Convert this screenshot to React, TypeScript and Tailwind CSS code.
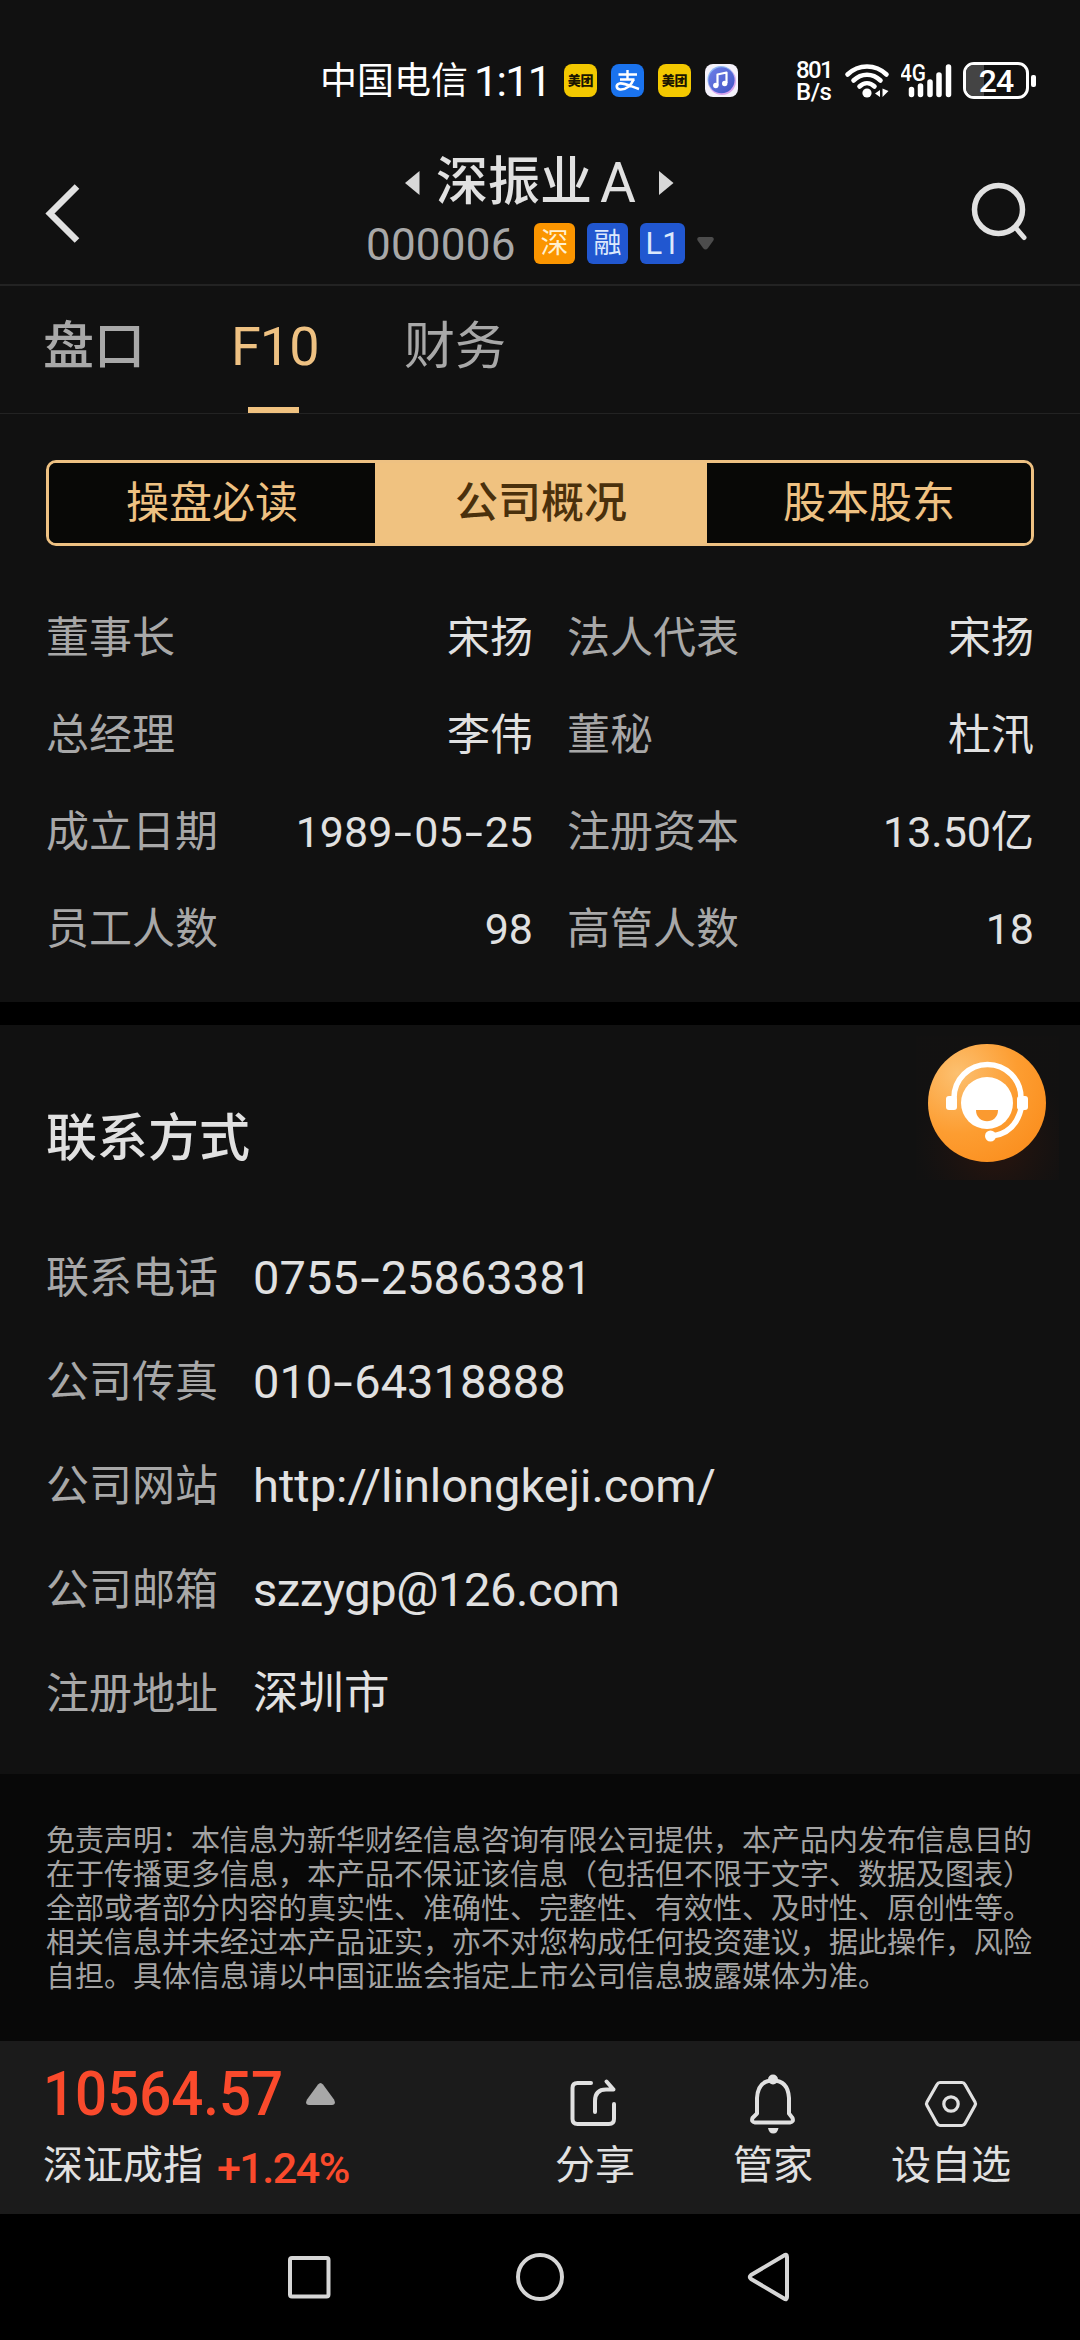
import React from "react";

const overview = [
  [["董事长", "宋扬"], ["法人代表", "宋扬"]],
  [["总经理", "李伟"], ["董秘", "杜汛"]],
  [["成立日期", "1989-05-25"], ["注册资本", "13.50亿"]],
  [["员工人数", "98"], ["高管人数", "18"]],
];

const contacts = [
  { label: "联系电话", value: "0755-25863381", style: "text-[47px]" },
  { label: "公司传真", value: "010-64318888", style: "text-[47px]" },
  { label: "公司网站", value: "http://linlongkeji.com/", style: "text-[47px]" },
  { label: "公司邮箱", value: "szzygp@126.com", style: "text-[47px] tracking-[-0.4px]" },
  { label: "注册地址", value: "深圳市", style: "text-[45.5px]" },
];

const disclaimer = [
  "免责声明：本信息为新华财经信息咨询有限公司提供，本产品内发布信息目的",
  "在于传播更多信息，本产品不保证该信息（包括但不限于文字、数据及图表）",
  "全部或者部分内容的真实性、准确性、完整性、有效性、及时性、原创性等。",
  "相关信息并未经过本产品证实，亦不对您构成任何投资建议，据此操作，风险",
  "自担。具体信息请以中国证监会指定上市公司信息披露媒体为准。",
];

/* Widens hyphens so that they sit evenly between figures. */
function Figures({ text }: { text: string }) {
  return (
    <>
      {text.split(/(-)/).map((part, i) =>
        part === "-" ? (
          <span key={i} className="inline-block w-[22px] scale-x-150 text-center">-</span>
        ) : (
          <React.Fragment key={i}>{part}</React.Fragment>
        )
      )}
    </>
  );
}

function StatusBar() {
  return (
    <div className="flex h-[120px] items-start pl-[320px] text-white">
      <div className="mt-[60px] h-[44px] w-[150px] whitespace-nowrap text-[37px] leading-[44px]">中国电信</div>
      <div className="mt-[59px] h-[44px] w-[94px] pl-[4px] text-[43px] leading-[44px] tracking-[-1.7px]">1:11</div>
      <div className="mt-[64px] flex gap-[14px]">
        <AppMeituan />
        <div className="flex size-[33px] items-center justify-center rounded-[8px] bg-[#1a73ee]">
          <svg width="33" height="33" viewBox="0 0 33 33" fill="none" stroke="#fff">
            <path d="M7.500 10.500H26M16.500 6v10M9 15.500h14.500" strokeWidth="2.400" />
            <path d="M22.500 15.500C20.500 21 15 26 9 25.500 5 25 4.500 20.500 8.500 19.500 13 18.500 20 22.500 28 25" strokeWidth="2.600" />
          </svg>
        </div>
        <AppMeituan />
        <div className="flex size-[33px] items-center justify-center rounded-[8px] bg-[#f4f2fb]">
          <svg width="33" height="33" viewBox="0 0 33 33">
            <defs>
              <linearGradient id="mus" x1="0" y1="0" x2="1" y2="1">
                <stop offset="0" stopColor="#6d7fe8" />
                <stop offset="1" stopColor="#4254c4" />
              </linearGradient>
            </defs>
            <circle cx="17" cy="17" r="14" fill="#d9a4ee" />
            <circle cx="16" cy="15.500" r="13.500" fill="#8fb8f4" />
            <circle cx="16.500" cy="16.200" r="13" fill="url(#mus)" />
            <path d="M12.500 21.500V10.500L21.500 8.500V19" fill="none" stroke="#fff" strokeWidth="2.200" strokeLinejoin="round" />
            <circle cx="10.800" cy="21.500" r="2.700" fill="#fff" />
            <circle cx="19.700" cy="19.500" r="2.700" fill="#fff" />
          </svg>
        </div>
      </div>
      <div className="ml-[58px] mt-[60px] w-[48px] whitespace-nowrap text-[24px] font-medium leading-[21.5px] tracking-[-1.6px]">
        <div>801</div>
        <div className="tracking-[-0.5px]">B/s</div>
      </div>
      <svg className="mt-[60px]" width="46" height="40" viewBox="0 0 46 40" fill="none" stroke="#fff" strokeLinecap="round">
        <path d="M3.500 14.500C14.500 3.800 31.500 3.800 42.500 14.500" strokeWidth="4.600" />
        <path d="M9.500 20.500C17.500 12.800 28.500 12.800 36.500 20.500" strokeWidth="4.600" />
        <path d="M15.500 26.500C20 22.200 26 22.200 30.500 26.500" strokeWidth="4.600" />
        <circle cx="23" cy="33" r="4.600" fill="#fff" stroke="none" />
        <path d="M36 30v7l-5-3.500zM38.500 28.500v8.500l6-6z" fill="#fff" stroke="none" />
      </svg>
      <div className="ml-[11px] mt-[60px] flex w-[53px]">
        <svg width="53" height="40" viewBox="0 0 53 40">
          <text x="-1" y="20.500" fontSize="23" fontWeight="500" fill="#fff" textLength="26" lengthAdjust="spacingAndGlyphs">4G</text>
          <g stroke="#fff" strokeWidth="5.500" strokeLinecap="round">
            <path d="M10.500 29.500v5M19.500 26v8.500M29 22v12.500M38 15v19.500M47.500 7v27.500" />
          </g>
        </svg>
      </div>
      <div className="ml-[9px] mt-[62px] flex items-center">
        <div className="relative flex h-[37px] w-[66px] overflow-hidden rounded-[11px] border-[3px] border-white">
          <div className="w-[18px] bg-[#444]" />
          <div className="absolute inset-0 text-center text-[32px] font-medium leading-[32px] tracking-[-1px]">24</div>
        </div>
        <div className="ml-[2px] h-[12px] w-[5px] rounded-[2px] bg-white" />
      </div>
    </div>
  );
}

function AppMeituan() {
  return (
    <div className="flex size-[33px] items-center justify-center rounded-[8px] bg-[#f3c800] text-[13px] font-black leading-[33px] tracking-[-0.2px] text-[#1a1500]">
      <span className="whitespace-nowrap">美团</span>
    </div>
  );
}

function Header() {
  return (
    <header className="flex h-[166px] border-b-2 border-[#232323] pl-[44px] pr-[49px]">
      <svg className="mt-[62px]" width="38" height="62" viewBox="0 0 38 62" fill="none" stroke="#e1e1e1" strokeWidth="6.500">
        <path d="M33 4.500L6 31.500l27 27" />
      </svg>
      <div className="ml-[283px] flex w-[360px] flex-col">
        <div className="mt-[33px] flex h-[60px] items-center whitespace-nowrap pl-[40px] text-[#e1e1e1]">
          <svg width="15" height="24" viewBox="0 0 15 24"><path d="M0 12L14.500 0v24z" fill="#d8d8d8" /></svg>
          <span className="ml-[16px] text-[52px] font-medium leading-[60px]">深振业</span>
          <span className="ml-[8px] text-[55px] leading-[60px]">A</span>
          <svg className="ml-[23px]" width="15" height="24" viewBox="0 0 15 24"><path d="M14.500 12L0 0v24z" fill="#d8d8d8" /></svg>
        </div>
        <div className="flex h-[60px] items-center whitespace-nowrap">
          <span className="w-[169px] pl-[1px] pt-[3px] text-[44px] leading-[60px] tracking-[0.2px] text-[#a8a8a8]">000006</span>
          <span className="h-[41px] w-[41px] rounded-[6px] bg-[#fb9500] text-center text-[28px] leading-[41px] text-[#fff0d0]">深</span>
          <span className="ml-[12px] h-[41px] w-[41px] rounded-[6px] bg-[#2157d0] text-center text-[28px] leading-[41px] text-[#dce8fc]">融</span>
          <span className="ml-[12px] h-[41px] w-[45px] rounded-[6px] bg-[#2157d0] text-center text-[31px] leading-[41px] text-[#dce8fc]">L1</span>
          <svg className="ml-[12px]" width="17" height="13" viewBox="0 0 17 13"><path d="M2 0h13q3 1 1 4l-5 7q-2.500 3-5 0l-5-7q-2-3 1-4z" fill="#4c4c4c" /></svg>
        </div>
      </div>
      <svg className="ml-auto mt-[62px]" width="60" height="60" viewBox="0 0 60 60" fill="none" stroke="#e1e1e1" strokeWidth="5.500">
        <circle cx="27.500" cy="27.500" r="24" />
        <path d="M44.500 45.500L53 55.500" strokeLinecap="round" strokeWidth="5" />
      </svg>
    </header>
  );
}

function Tabs() {
  return (
    <nav className="flex h-[128px] items-start border-b border-[#232323] text-[51px] text-[#a8a8a8]">
      <div className="ml-[43px] mt-[31px] font-medium leading-[60px]">盘口</div>
      <div className="ml-[86px] flex h-[127px] w-[87px] flex-col justify-between pt-[31px] text-[54px] text-[#eec182]">
        <span className="leading-[60px] tracking-[-1px]">F10</span>
        <span className="ml-[17px] h-[6px] w-[51px] bg-[#f0c280]" />
      </div>
      <div className="ml-[86px] mt-[31px] leading-[60px]">财务</div>
    </nav>
  );
}

function Segments() {
  return (
    <div className="mx-[46px] grid h-[86px] grid-cols-[326px_332px_1fr] overflow-hidden rounded-[10px] border-[3px] border-[#eec182] text-center text-[43px] leading-[80px] text-[#eec182]">
      <div className="bg-[#080806]">操盘必读</div>
      <div className="bg-[#f0c280] font-medium text-[#4a300c]">公司概况</div>
      <div className="bg-[#080806]">股本股东</div>
    </div>
  );
}

function Overview() {
  return (
    <div className="mt-[44px] flex flex-col px-[46px] text-[43px] leading-[97px]">
      {overview.map((row, i) => (
        <div key={i} className="flex h-[97px] whitespace-nowrap">
          {row.map(([label, value], j) => (
            <div key={j} className={j === 0 ? "flex w-[487px] justify-between" : "ml-[34px] flex flex-1 justify-between"}>
              <span className="text-[#a8a8a8]">{label}</span>
              <span className="text-[#e1e1e1]"><Figures text={value} /></span>
            </div>
          ))}
        </div>
      ))}
    </div>
  );
}

function Contacts() {
  return (
    <section className="h-[749px] bg-[#111] px-[46px] pt-[79px]">
      <h2 className="text-[51px] font-medium leading-[70px] text-[#e1e1e1]">联系方式</h2>
      <div className="mt-[52px]">
        {contacts.map(({ label, value, style }) => (
          <div key={label} className="flex h-[104px] items-center whitespace-nowrap">
            <span className="w-[207px] text-[43px] leading-[104px] text-[#a8a8a8]">{label}</span>
            <span className={style + " leading-[104px] text-[#e1e1e1]"}><Figures text={value} /></span>
          </div>
        ))}
      </div>
    </section>
  );
}

function ServiceButton() {
  return (
    <svg className="absolute left-[912px] top-[1036px]" width="150" height="146" viewBox="0 0 150 146">
      <defs>
        <radialGradient id="orb" cx="0.250" cy="0.250" r="0.850">
          <stop offset="0" stopColor="#fcc070" />
          <stop offset="0.600" stopColor="#fd9d31" />
          <stop offset="1" stopColor="#fb9020" />
        </radialGradient>
        <radialGradient id="glow" cx="0.550" cy="0.750" r="0.550">
          <stop offset="0.300" stopColor="#a02800" stopOpacity="0.300" />
          <stop offset="1" stopColor="#602010" stopOpacity="0.030" />
        </radialGradient>
      </defs>
      <rect x="4" y="0" width="143" height="144" fill="url(#glow)" opacity="0.400" />
      <circle cx="75" cy="67" r="59" fill="url(#orb)" />
      <circle cx="75" cy="67" r="26" fill="#fff" />
      <path d="M64 74h22c0 15-22 15-22 0z" fill="#fb9a30" />
      <g fill="none" stroke="#fff" strokeWidth="5.500">
        <path d="M42 62a33.500 33.500 0 0 1 67 0" />
        <path d="M109 73C105 89 96 98 80 100" />
      </g>
      <rect x="34" y="60" width="11" height="14" rx="3" fill="#fff" />
      <rect x="105" y="60" width="11" height="14" rx="3" fill="#fff" />
      <circle cx="78.500" cy="100" r="5.500" fill="#fff" />
    </svg>
  );
}

function BottomBar() {
  return (
    <footer className="flex h-[173px] bg-[#1b1b1b] text-[#e1e1e1]">
      <div className="w-[506px] whitespace-nowrap pl-[43px] pt-[17px]">
        <div className="flex h-[72px] items-center">
          <span className="w-[263px] origin-left scale-x-[0.91] text-[62px] font-medium leading-[72px] text-[#fa4a2c]">10564.57</span>
          <svg width="29" height="22" viewBox="0 0 29 22"><path d="M12 1.500q2.500-3 5 0l11 15q2.500 5-2 5.500H3q-4.500-.5-2-5.500z" fill="#a8a8a8" /></svg>
        </div>
        <div className="flex h-[72px] items-center">
          <span className="text-[40px] leading-[72px]">深证成指</span>
          <span className="ml-[14px] pt-[3px] text-[43px] font-medium leading-[72px] tracking-[-1.5px] text-[#fa4a2c]">+1.24%</span>
        </div>
      </div>
      <Action label="分享">
        <path d="M26 7H12.500Q7.500 7 7.500 12v31Q7.500 48 12.500 48H44Q49 48 49 43V28" />
        <path d="M30 36V25Q30 13.500 41 13.500H48.500L41.500 5.500" />
      </Action>
      <Action label="管家">
        <path d="M14 37.500V22Q15 4.500 30 4.500T46 22V37.500L49.500 42Q51 46 47 46.500H12Q8 46 9.500 42Z" />
        <circle cx="30" cy="3.500" r="5" fill="#e1e1e1" stroke="none" />
        <path d="M25 52h10.500q-1 5.500-5.250 5.500T25 52z" fill="#e1e1e1" stroke="none" />
      </Action>
      <Action label="设自选">
        <path strokeWidth="3.200" d="M19 6.500H41Q43 6.500 44 8.500L54 26Q55 27.700 54 29.500L44 47.500Q43 49.500 41 49.500H19Q17 49.500 16 47.500L6 29.500Q5 27.700 6 26L16 8.500Q17 6.500 19 6.500Z" />
        <circle cx="30" cy="28" r="7.200" strokeWidth="3.200" />
      </Action>
    </footer>
  );
}

function Action({ label, children }: { label: string; children: React.ReactNode }) {
  return (
    <div className="flex w-[178px] flex-col items-center pt-[35px]">
      <svg className="overflow-visible" width="60" height="60" viewBox="0 0 60 60" fill="none" stroke="#e1e1e1" strokeWidth="4" strokeLinecap="round" strokeLinejoin="round">
        {children}
      </svg>
      <span className="text-[40px] leading-[60px]">{label}</span>
    </div>
  );
}

export default function App() {
  return (
    <div className="relative h-[2340px] w-[1080px] overflow-hidden bg-[#111] font-['Roboto','Noto_Sans_CJK_SC',sans-serif]">
      <StatusBar />
      <Header />
      <Tabs />
      <div className="h-[588px] pt-[46px]">
        <Segments />
        <Overview />
      </div>
      <div className="h-[23px] bg-black" />
      <Contacts />
      <section className="h-[267px] bg-[#080808] px-[46px] pt-[50px] text-[29px] leading-[34px] text-[#a3a3a3]">
        {disclaimer.map((line) => (
          <div key={line} className="whitespace-nowrap">{line}</div>
        ))}
      </section>
      <BottomBar />
      <div className="flex h-[126px] items-center justify-center bg-black">
        <svg width="510" height="56" viewBox="0 0 510 56" fill="none" stroke="#d6d6d6" strokeWidth="4" strokeLinejoin="round">
          <rect x="5" y="9" width="38.500" height="38.500" rx="2" />
          <circle cx="255" cy="28" r="22" />
          <path d="M499 6.500Q502 4.500 502 8V48Q502 51.500 499 49.500L466 30Q463.500 28 466 26Z" />
        </svg>
      </div>
      <ServiceButton />
    </div>
  );
}
